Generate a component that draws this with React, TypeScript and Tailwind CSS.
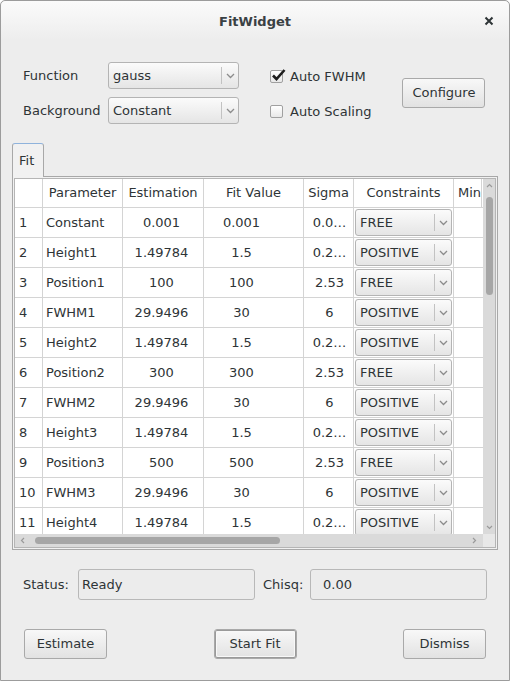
import React from "react";

const rows: string[][] = [
  ["1", "Constant", "0.001", "0.001", "0.0…", "FREE"],
  ["2", "Height1", "1.49784", "1.5", "0.2…", "POSITIVE"],
  ["3", "Position1", "100", "100", "2.53", "FREE"],
  ["4", "FWHM1", "29.9496", "30", "6", "POSITIVE"],
  ["5", "Height2", "1.49784", "1.5", "0.2…", "POSITIVE"],
  ["6", "Position2", "300", "300", "2.53", "FREE"],
  ["7", "FWHM2", "29.9496", "30", "6", "POSITIVE"],
  ["8", "Height3", "1.49784", "1.5", "0.2…", "POSITIVE"],
  ["9", "Position3", "500", "500", "2.53", "FREE"],
  ["10", "FWHM3", "29.9496", "30", "6", "POSITIVE"],
  ["11", "Height4", "1.49784", "1.5", "0.2…", "POSITIVE"],
];

function Chevron() {
  return (
    <svg width="9" height="6" viewBox="0 0 9 6" className="shrink-0">
      <path d="M1 1 L4.5 4.5 L8 1" fill="none" stroke="#8c8c8c" strokeWidth="1.3" />
    </svg>
  );
}

function Combo({ text, className }: { text: string; className: string }) {
  return (
    <div
      className={`flex items-center border border-[#b4b4b4] rounded-[3px] bg-linear-to-b from-[#fbfbfb] to-[#e5e5e5] ${className}`}
    >
      <span className="flex-1 pl-[4px] whitespace-nowrap">{text}</span>
      <div className="w-px h-[17px] bg-[#c2c2c2]" />
      <div className="w-[16px] flex justify-center">
        <Chevron />
      </div>
    </div>
  );
}

function Button({ text, isDefault }: { text: string; isDefault?: boolean }) {
  return (
    <div
      className={`w-[83px] h-[30px] border border-[#a9a9a9] rounded-[3px] bg-linear-to-b from-[#f8f8f8] to-[#e2e2e2] flex items-center justify-center ${
        isDefault ? "shadow-[inset_0_0_0_1px_#9a9a9a]" : ""
      }`}
    >
      {isDefault ? (
        <div className="w-[79px] h-[26px] border border-[#f8f8f8] rounded-[2px] flex items-center justify-center">
          {text}
        </div>
      ) : (
        text
      )}
    </div>
  );
}

function Checkbox({ checked }: { checked?: boolean }) {
  return (
    <div className="relative w-[13px] h-[13px] border border-[#a0a0a0] rounded-[2px] bg-linear-to-b from-[#ffffff] to-[#e8e8e8]">
      {checked && (
        <svg
          width="16"
          height="14"
          viewBox="0 0 16 14"
          className="absolute left-[0px] top-[-3px]"
        >
          <path d="M2 7.5 L5.5 11 L13.5 2" fill="none" stroke="#1e1e1e" strokeWidth="2.6" strokeLinejoin="miter" />
        </svg>
      )}
    </div>
  );
}

export default function App() {
  const cell = "h-full flex items-center border-r border-[#d4d4d4] shrink-0";
  return (
    <div className="w-[510px] h-[681px] border border-[#9c9c9c] rounded-t-[5px] bg-[#ededed] flex flex-col font-['DejaVu_Sans',sans-serif] text-[13px] text-[#2e3436] overflow-hidden">
      {/* title bar */}
      <div className="relative h-[39px] shrink-0 flex items-center justify-center bg-linear-to-b from-[#fbfbfb] to-[#ededed] rounded-t-[5px]">
        <span className="font-bold text-[#3a4144] pt-[2px]">FitWidget</span>
        <svg width="10" height="10" viewBox="0 0 10 10" className="absolute right-[15px] top-[15px]">
          <path d="M1.5 1.5 L8.5 8.5 M8.5 1.5 L1.5 8.5" stroke="#2e3436" strokeWidth="2" />
        </svg>
      </div>

      {/* controls */}
      <div className="mt-[22px] pl-[22px] flex items-center">
        <div className="grid grid-cols-[85px_131px] gap-y-[8px] items-center">
          <span>Function</span>
          <Combo text="gauss" className="h-[27px]" />
          <span>Background</span>
          <Combo text="Constant" className="h-[27px]" />
        </div>
        <div className="ml-[31px] flex flex-col gap-[15px] mt-[2px]">
          <div className="flex items-center gap-[7px]">
            <Checkbox checked />
            <span>Auto FWHM</span>
          </div>
          <div className="flex items-center gap-[7px]">
            <Checkbox />
            <span>Auto Scaling</span>
          </div>
        </div>
        <div className="ml-[31px] mt-[-1px]">
          <Button text="Configure" />
        </div>
      </div>

      {/* tabs */}
      <div className="mt-[19px] ml-[11px] w-[486px] flex flex-col">
        <div className="flex">
          <div className="w-[32px] h-[34px] border border-[#a8a8a8] border-t-[#8fb3dc] border-b-0 rounded-t-[3px] bg-[#f1f1f1] flex items-center pl-[6px] -mb-px relative z-10">
            Fit
          </div>
        </div>
        <div className="h-[374px] border border-[#a8a8a8] bg-[#f1f1f1] p-px">
          <div className="h-full border border-[#b5b5b5] bg-white flex flex-col">
            <div className="flex h-[355px]">
              {/* table viewport */}
              <div className="w-[468px] overflow-hidden">
                <div className="flex h-[29px] border-b border-[#d4d4d4] w-[520px]">
                  <div className={`${cell} w-[28px]`} />
                  <div className={`${cell} w-[80px] justify-center`}>Parameter</div>
                  <div className={`${cell} w-[81px] justify-center`}>Estimation</div>
                  <div className={`${cell} w-[100px] justify-center`}>Fit Value</div>
                  <div className={`${cell} w-[50px] justify-center`}>Sigma</div>
                  <div className={`${cell} w-[100px] justify-center`}>Constraints</div>
                  <div className={`${cell} w-[28px] pl-[4px]`}>Min</div>
                </div>
                {rows.map((r) => (
                  <div key={r[0]} className="flex h-[30px] border-b border-[#d4d4d4] w-[520px]">
                    <div className={`${cell} w-[28px] pl-[4px]`}>{r[0]}</div>
                    <div className={`${cell} w-[80px] pl-[3px]`}>{r[1]}</div>
                    <div className={`${cell} w-[81px] justify-center pr-[3px]`}>{r[2]}</div>
                    <div className={`${cell} w-[100px] justify-center pr-[24px]`}>{r[3]}</div>
                    <div className={`${cell} w-[50px] justify-center pl-[2px]`}>{r[4]}</div>
                    <div className={`${cell} w-[100px] pl-px`}>
                      <Combo text={r[5]} className="w-[97px] h-[27px]" />
                    </div>
                    <div className={`${cell} w-[80px]`} />
                  </div>
                ))}
              </div>
              {/* vertical scrollbar */}
              <div className="w-[12px] bg-[#dadada] flex flex-col items-center">
                <svg width="7" height="5" viewBox="0 0 7 5" className="mt-[4px]">
                  <path d="M1 4 L3.5 1.5 L6 4" fill="none" stroke="#9a9a9a" strokeWidth="1.2" />
                </svg>
                <div className="mt-[9px] w-[7px] h-[98px] rounded-full bg-[#a6a6a6]" />
                <div className="flex-1" />
                <svg width="7" height="5" viewBox="0 0 7 5" className="mb-[4px]">
                  <path d="M1 1 L3.5 3.5 L6 1" fill="none" stroke="#9a9a9a" strokeWidth="1.2" />
                </svg>
              </div>
            </div>
            {/* horizontal scrollbar */}
            <div className="flex h-[13px]">
              <div className="w-[468px] bg-[#dadada] flex items-center">
                <svg width="5" height="7" viewBox="0 0 5 7" className="ml-[5px]">
                  <path d="M4 1 L1.5 3.5 L4 6" fill="none" stroke="#9a9a9a" strokeWidth="1.2" />
                </svg>
                <div className="ml-[10px] w-[245px] h-[7px] rounded-full bg-[#a6a6a6]" />
                <div className="flex-1" />
                <svg width="5" height="7" viewBox="0 0 5 7" className="mr-[6px]">
                  <path d="M1 1 L3.5 3.5 L1 6" fill="none" stroke="#9a9a9a" strokeWidth="1.2" />
                </svg>
              </div>
              <div className="w-[12px] bg-[#e8e8e8]" />
            </div>
          </div>
        </div>
      </div>

      {/* status */}
      <div className="mt-[19px] pl-[22px] flex items-center">
        <span className="w-[55px]">Status:</span>
        <div className="w-[177px] h-[31px] border border-[#b8b8b8] rounded-[3px] bg-[#ececec] flex items-center pl-[3px]">
          Ready
        </div>
        <span className="ml-[8px] w-[47px]">Chisq:</span>
        <div className="w-[177px] h-[31px] border border-[#b8b8b8] rounded-[3px] bg-[#ececec] flex items-center pl-[12px]">
          0.00
        </div>
      </div>

      {/* buttons */}
      <div className="mt-[29px] pl-[23px] pr-[23px] flex items-center justify-between">
        <Button text="Estimate" />
        <Button text="Start Fit" isDefault />
        <Button text="Dismiss" />
      </div>
    </div>
  );
}
